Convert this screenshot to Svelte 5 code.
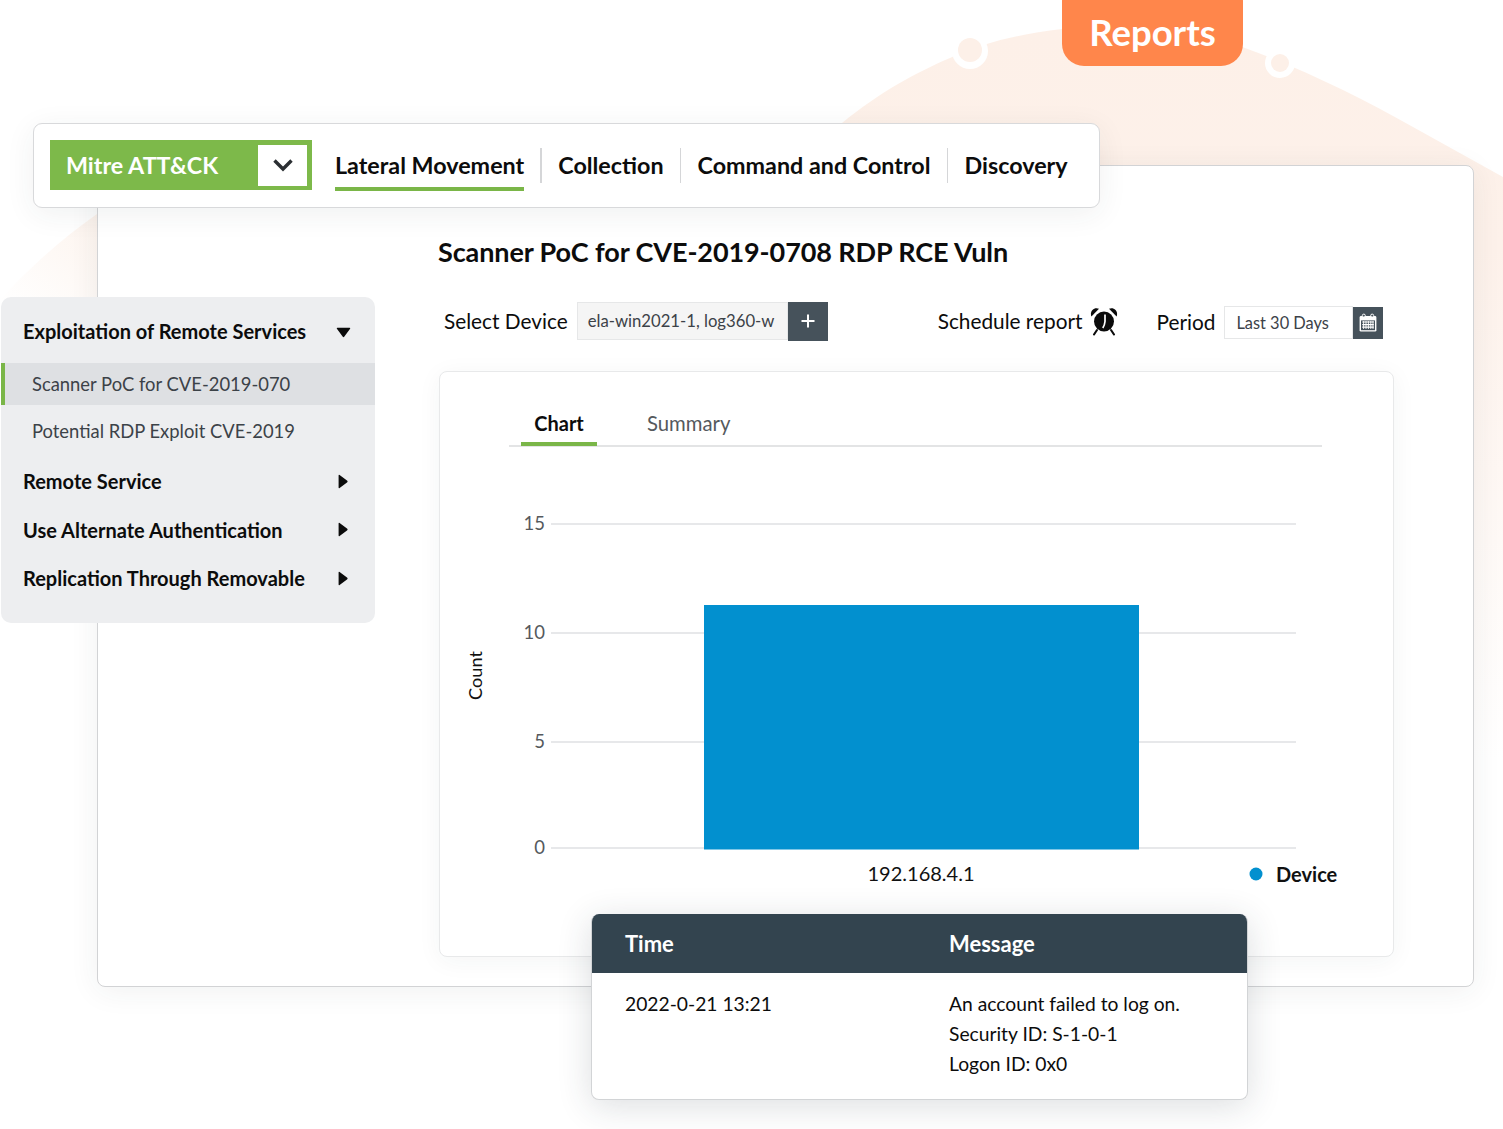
<script>
  const tabs = ['Lateral Movement', 'Collection', 'Command and Control', 'Discovery'];
  const groups = ['Remote Service', 'Use Alternate Authentication', 'Replication Through Removable'];
  const gridlines = [
    { y: 524, label: '15' },
    { y: 633, label: '10' },
    { y: 742, label: '5' },
    { y: 848, label: '0' }
  ];
</script>

<div class="stage">
  <svg class="blob" viewBox="0 0 1503 1129" width="1503" height="1129" aria-hidden="true">
    <defs>
      <linearGradient id="peach" gradientUnits="userSpaceOnUse" x1="0" y1="30" x2="0" y2="760">
        <stop offset="0" stop-color="#fdf0e8" />
        <stop offset="0.3" stop-color="#fdf1ea" />
        <stop offset="1" stop-color="#ffffff" />
      </linearGradient>
      <linearGradient id="peachLeft" x1="1" y1="0" x2="0" y2="1">
        <stop offset="0" stop-color="#fdf4ee" />
        <stop offset="1" stop-color="#ffffff" />
      </linearGradient>
    </defs>
    <path d="M842 123 C 880 92, 915 73, 950 58 C 985 42, 1020 34, 1062 29 C 1120 24, 1190 25, 1245 48 C 1300 68, 1360 97, 1413 127 L 1503 177 L 1503 760 L 1473 760 L 1473 170 L 842 170 Z" fill="url(#peach)" />
    <path d="M0 300 C 25 272, 60 240, 97 214 L 97 300 Z" fill="url(#peachLeft)" />
    <circle cx="970" cy="51" r="18" fill="#fff" />
    <circle cx="970" cy="50" r="12" fill="#fdf0e8" />
    <circle cx="1280" cy="63" r="15" fill="#fff" />
    <circle cx="1280" cy="63" r="9" fill="#fdf0e8" />
  </svg>

  <div class="badge">Reports</div>

  <section class="main">
    <h1>Scanner PoC for CVE-2019-0708 RDP RCE Vuln</h1>
    <div class="controls">
      <div class="device">
        <span class="lbl">Select Device</span>
        <span class="field devfield">ela-win2021-1, log360-w</span>
        <span class="sq plus">
          <svg width="16" height="16" viewBox="0 0 16 16"><path d="M8 1.500v13M1.500 8h13" stroke="#fff" stroke-width="2" /></svg>
        </span>
      </div>
      <div class="sched">
        <span class="lbl">Schedule report</span>
        <svg class="alarm" width="28" height="30" viewBox="0 0 28 30">
          <path d="M1.400 10.400C-.6 5.800 3.800 .6 9 2.800Z" fill="#0b0b0b" />
          <path d="M26.600 10.400C28.600 5.800 24.200 .6 19 2.800Z" fill="#0b0b0b" />
          <circle cx="14" cy="15.500" r="11.800" fill="#fff" />
          <circle cx="14" cy="15.500" r="10" fill="#0b0b0b" />
          <path d="M15 8.500L15 15.500Q14.700 19 12.800 22" fill="none" stroke="#fff" stroke-width="1.700" />
          <path d="M7 24L4 28.500M21 24l3 4.500" stroke="#0b0b0b" stroke-width="2.100" stroke-linecap="round" />
        </svg>
      </div>
      <div class="period">
        <span class="lbl">Period</span>
        <span class="field perfield">Last 30 Days</span>
        <span class="sq cal">
          <svg width="20" height="20" viewBox="0 0 20 20">
            <rect x="1.600" y="3" width="16.800" height="15.600" rx="1.400" fill="#fff" />
            <rect x="3" y="7.400" width="14" height="9.800" fill="#46525b" />
            <path d="M4.200 9h11.600M4.200 11.600h11.600M4.200 14.200h11.600" stroke="#fff" stroke-width="1.200" />
            <path d="M5.600 8v8M8 8v8M10.400 8v8M12.800 8v8M15 8v8" stroke="#fff" stroke-width="0.900" />
            <circle cx="5.800" cy="2.600" r="1.500" fill="#46525b" stroke="#fff" />
            <circle cx="14.200" cy="2.600" r="1.500" fill="#46525b" stroke="#fff" />
          </svg>
        </span>
      </div>
    </div>

    <div class="chartcard">
      <div class="subtabs">
        <span class="sub on">Chart</span>
        <span class="sub">Summary</span>
      </div>
      <svg class="chart" viewBox="439 447 954 460" width="954" height="460">
        {#each gridlines as g}
          <line x1="551" x2="1296" y1={g.y} y2={g.y} stroke="#dfe1e3" stroke-width="1.500" />
          <text x="545" y={g.y + 6} text-anchor="end" class="tick">{g.label}</text>
        {/each}
        <rect x="704" y="605" width="435" height="244.500" fill="#0290cf" />
        <text transform="translate(482 675.500) rotate(-90)" text-anchor="middle" class="count">Count</text>
        <text x="921" y="881" text-anchor="middle" class="axis">192.168.4.1</text>
        <circle cx="1256" cy="874" r="6.500" fill="#0290cf" />
        <text x="1276" y="881.500" class="legend">Device</text>
      </svg>
    </div>
  </section>

  <nav class="topnav">
    <div class="select">
      <span class="seltext">Mitre ATT&amp;CK</span>
      <span class="selbtn">
        <svg width="22" height="14" viewBox="0 0 22 14"><path d="M2.500 2.500L11 11l8.500-8.500" fill="none" stroke="#2b2f33" stroke-width="3.400" /></svg>
      </span>
    </div>
    <div class="tabs">
      {#each tabs as t, i}
        <span class="tab" class:active={i === 0}>{t}</span>
      {/each}
    </div>
  </nav>

  <aside class="side">
    <div class="grp first">
      <span>Exploitation of Remote Services</span>
      <svg width="15" height="11" viewBox="0 0 15 11"><path d="M1.500 .8h12q1.200 0 .6 1L8.400 9.600q-.9 1.200-1.800 0L.9 1.800q-.6-1 .6-1Z" fill="#0b0b0b" /></svg>
    </div>
    <div class="item sel">Scanner PoC for CVE-2019-070</div>
    <div class="item">Potential RDP Exploit CVE-2019</div>
    {#each groups as g}
      <div class="grp">
        <span>{g}</span>
        <svg width="10" height="15" viewBox="0 0 10 15"><path d="M.6 1.500v12q0 1.200 1 .6L9 8.400q1.200-.9 0-1.800L1.600.9q-1-.6-1 .6Z" fill="#0b0b0b" /></svg>
      </div>
    {/each}
  </aside>

  <div class="log">
    <div class="row head">
      <span>Time</span>
      <span>Message</span>
    </div>
    <div class="row body">
      <span>2022-0-21 13:21</span>
      <span class="msg">An account failed to log on.<br />Security ID: S-1-0-1<br />Logon ID: 0x0</span>
    </div>
  </div>
</div>

<style>
  :global(body) {
    margin: 0;
    background: #fff;
  }
  .stage {
    position: relative;
    width: 1503px;
    height: 1129px;
    overflow: hidden;
    font-family: Lato, "Open Sans", sans-serif;
    color: #0c0c0c;
  }
  .blob {
    position: absolute;
    inset: 0;
  }
  .badge {
    position: absolute;
    left: 1062px;
    top: -20px;
    width: 181px;
    height: 86px;
    padding-top: 18px;
    box-sizing: border-box;
    background: #ff864b;
    border-radius: 22px;
    color: #fff;
    font-size: 36.500px;
    font-weight: 700;
    display: flex;
    align-items: center;
    justify-content: center;
  }
  .main {
    position: absolute;
    left: 97px;
    top: 165px;
    width: 1376.500px;
    height: 821.500px;
    box-sizing: border-box;
    background: #fff;
    border: 1px solid #d2d3d5;
    border-radius: 8px;
    box-shadow: 0 4px 30px rgba(40, 50, 60, 0.07);
    padding: 68px 0 0 340px;
  }
  h1 {
    margin: 0;
    font-size: 27px;
    line-height: 36px;
    font-weight: 700;
    letter-spacing: -0.1px;
  }
  .controls {
    display: flex;
    align-items: center;
    margin-top: 31px;
    margin-left: 6px;
    height: 40px;
  }
  .lbl {
    font-size: 20.800px;
    position: relative;
    top: -1px;
  }
  .device,
  .sched,
  .period {
    display: flex;
    align-items: center;
    flex: none;
  }
  .field {
    box-sizing: border-box;
    display: flex;
    align-items: center;
    color: #3c4248;
    border: 1px solid #e6e7e8;
    white-space: nowrap;
  }
  .devfield {
    margin-left: 9px;
    width: 211px;
    height: 38px;
    padding-left: 10px;
    background: #f5f5f5;
    font-size: 16.700px;
  }
  .sq {
    display: flex;
    align-items: center;
    justify-content: center;
    background: #46525b;
  }
  .plus {
    width: 40px;
    height: 39px;
  }
  .sched {
    margin-left: 110px;
    gap: 8px;
  }
  .period {
    margin-left: 38px;
    margin-top: 3px;
  }
  .perfield {
    margin-left: 9px;
    width: 129px;
    height: 33px;
    padding-left: 11px;
    background: #fff;
    font-size: 16.400px;
  }
  .cal {
    width: 30px;
    height: 32px;
  }
  .chartcard {
    box-sizing: border-box;
    width: 954.500px;
    height: 585.500px;
    margin-top: 30px;
    margin-left: 1px;
    background: #fff;
    border: 1px solid #e8e9ea;
    border-radius: 8px;
    box-shadow: 0 4px 24px rgba(40, 50, 60, 0.05);
    padding-top: 28px;
  }
  .subtabs {
    display: flex;
    margin: 0 71px 0 69px;
    height: 47px;
    box-sizing: border-box;
    border-bottom: 2px solid #e3e4e5;
    padding-left: 12px;
    gap: 50px;
  }
  .sub {
    box-sizing: border-box;
    height: 46px;
    font-size: 20.300px;
    line-height: 47px;
    color: #55595d;
  }
  .sub.on {
    width: 76px;
    text-align: center;
    color: #0c0c0c;
    font-size: 20px;
    font-weight: 700;
    line-height: 46px;
    border-bottom: 4px solid #7ab648;
  }
  .chart {
    display: block;
    margin-left: -1px;
  }
  .tick {
    font-size: 18.500px;
    fill: #55595d;
  }
  .axis {
    font-size: 20px;
    fill: #111;
  }
  .count {
    font-size: 18.200px;
    fill: #111;
  }
  .legend {
    font-size: 20px;
    font-weight: 700;
    fill: #111;
  }
  .topnav {
    position: absolute;
    left: 33px;
    top: 123px;
    width: 1066.500px;
    height: 84.500px;
    box-sizing: border-box;
    background: #fff;
    border: 1px solid #d8d9db;
    border-radius: 9px;
    box-shadow: 0 6px 30px rgba(40, 50, 60, 0.07);
    display: flex;
    padding: 16px 0 0 16px;
  }
  .select {
    box-sizing: border-box;
    flex: none;
    width: 262px;
    height: 50px;
    background: #7db94a;
    display: flex;
    align-items: center;
    justify-content: space-between;
    padding: 0 5px 0 16px;
    color: #fff;
    font-size: 23.300px;
    font-weight: 700;
  }
  .selbtn {
    width: 49px;
    height: 41px;
    background: #fff;
    display: flex;
    align-items: center;
    justify-content: center;
  }
  .tabs {
    display: flex;
    margin-left: 23px;
    height: 51px;
  }
  .tab {
    position: relative;
    font-size: 23.300px;
    font-weight: 700;
    line-height: 50px;
    white-space: nowrap;
    margin-right: 34px;
  }
  .tab:not(:last-child)::after {
    content: "";
    position: absolute;
    right: -17.500px;
    top: 8px;
    height: 35px;
    width: 1.500px;
    background: #d5d6d8;
  }
  .tab.active {
    border-bottom: 4px solid #7ab648;
    height: 47px;
  }
  .side {
    position: absolute;
    left: 1px;
    top: 297px;
    width: 374px;
    height: 326px;
    box-sizing: border-box;
    background: #edeef0;
    border-radius: 10px;
    padding-top: 14px;
  }
  .grp {
    display: flex;
    align-items: center;
    justify-content: space-between;
    height: 48.500px;
    padding: 0 27px 0 22px;
    font-size: 20px;
    font-weight: 700;
  }
  .grp.first {
    height: 42px;
    margin-bottom: 10px;
    padding-right: 24px;
  }
  .grp.first span {
    position: relative;
    top: -1px;
  }
  .item {
    height: 42px;
    margin-bottom: 5px;
    display: flex;
    align-items: center;
    padding-left: 31px;
    font-size: 18.400px;
    color: #3c4248;
  }
  .item:last-of-type {
    margin-bottom: 9px;
  }
  .item.sel {
    background: #dee0e3;
    border-left: 4px solid #7ab648;
    padding-left: 27px;
  }
  .log {
    position: absolute;
    left: 591px;
    top: 914px;
    width: 656.500px;
    height: 186px;
    box-sizing: border-box;
    background: #fff;
    border-radius: 8px;
    border: 1px solid #d2d4d6;
    border-top: none;
    box-shadow: 0 6px 34px rgba(40, 50, 60, 0.16);
    overflow: hidden;
  }
  .row {
    display: grid;
    grid-template-columns: 324px 1fr;
    padding-left: 33px;
    font-size: 19.250px;
  }
  .head {
    height: 59px;
    align-items: center;
    background: #33444f;
    color: #fff;
    font-size: 22px;
    font-weight: 700;
  }
  .body {
    padding-top: 16px;
    line-height: 30px;
  }
</style>
